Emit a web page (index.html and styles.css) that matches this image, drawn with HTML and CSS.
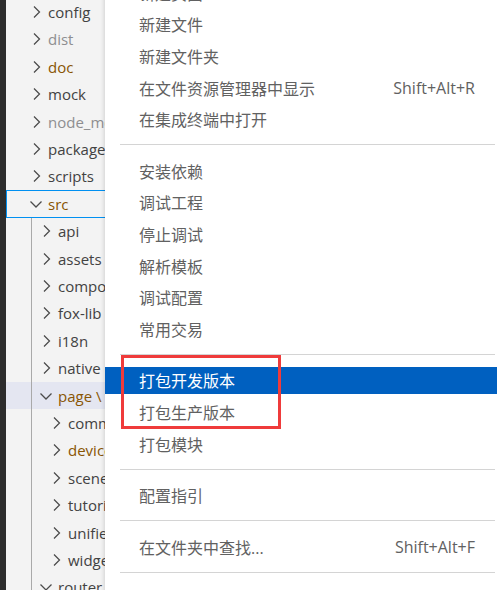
FILE: index.html
```html
<!DOCTYPE html>
<html lang="zh-CN">
<head>
<meta charset="utf-8">
<title>Explorer context menu</title>
<link rel="stylesheet" href="styles.css">
</head>
<body>
<div class="app">
  <div class="activity"></div>
  <div class="sidebar">
    <div class="tree">
      <div class="row d1"><span class="tw"><svg viewBox="0 0 16 16"><path d="M6 2.5 L11.5 8 L6 13.5"/></svg></span><span class="name">config</span></div>
      <div class="row d1"><span class="tw"><svg viewBox="0 0 16 16"><path d="M6 2.5 L11.5 8 L6 13.5"/></svg></span><span class="name ignored">dist</span></div>
      <div class="row d1"><span class="tw"><svg viewBox="0 0 16 16"><path d="M6 2.5 L11.5 8 L6 13.5"/></svg></span><span class="name modified">doc</span></div>
      <div class="row d1"><span class="tw"><svg viewBox="0 0 16 16"><path d="M6 2.5 L11.5 8 L6 13.5"/></svg></span><span class="name">mock</span></div>
      <div class="row d1"><span class="tw"><svg viewBox="0 0 16 16"><path d="M6 2.5 L11.5 8 L6 13.5"/></svg></span><span class="name ignored">node_modules</span></div>
      <div class="row d1"><span class="tw"><svg viewBox="0 0 16 16"><path d="M6 2.5 L11.5 8 L6 13.5"/></svg></span><span class="name">packages</span></div>
      <div class="row d1"><span class="tw"><svg viewBox="0 0 16 16"><path d="M6 2.5 L11.5 8 L6 13.5"/></svg></span><span class="name">scripts</span></div>
      <div class="row d1 focused"><span class="tw"><svg viewBox="0 0 16 16"><path d="M2.5 5.5 L8 11 L13.5 5.5"/></svg></span><span class="name modified">src</span></div>
      <div class="group">
        <div class="row d2"><span class="tw"><svg viewBox="0 0 16 16"><path d="M6 2.5 L11.5 8 L6 13.5"/></svg></span><span class="name">api</span></div>
        <div class="row d2"><span class="tw"><svg viewBox="0 0 16 16"><path d="M6 2.5 L11.5 8 L6 13.5"/></svg></span><span class="name">assets</span></div>
        <div class="row d2"><span class="tw"><svg viewBox="0 0 16 16"><path d="M6 2.5 L11.5 8 L6 13.5"/></svg></span><span class="name">components</span></div>
        <div class="row d2"><span class="tw"><svg viewBox="0 0 16 16"><path d="M6 2.5 L11.5 8 L6 13.5"/></svg></span><span class="name">fox-lib</span></div>
        <div class="row d2"><span class="tw"><svg viewBox="0 0 16 16"><path d="M6 2.5 L11.5 8 L6 13.5"/></svg></span><span class="name">i18n</span></div>
        <div class="row d2"><span class="tw"><svg viewBox="0 0 16 16"><path d="M6 2.5 L11.5 8 L6 13.5"/></svg></span><span class="name">native</span></div>
        <div class="row d2 hover"><span class="tw"><svg viewBox="0 0 16 16"><path d="M2.5 5.5 L8 11 L13.5 5.5"/></svg></span><span class="name modified">page \ views</span></div>
        <div class="row d3"><span class="tw"><svg viewBox="0 0 16 16"><path d="M6 2.5 L11.5 8 L6 13.5"/></svg></span><span class="name">common</span></div>
        <div class="row d3"><span class="tw"><svg viewBox="0 0 16 16"><path d="M6 2.5 L11.5 8 L6 13.5"/></svg></span><span class="name modified">device</span></div>
        <div class="row d3"><span class="tw"><svg viewBox="0 0 16 16"><path d="M6 2.5 L11.5 8 L6 13.5"/></svg></span><span class="name">scene</span></div>
        <div class="row d3"><span class="tw"><svg viewBox="0 0 16 16"><path d="M6 2.5 L11.5 8 L6 13.5"/></svg></span><span class="name">tutorial</span></div>
        <div class="row d3"><span class="tw"><svg viewBox="0 0 16 16"><path d="M6 2.5 L11.5 8 L6 13.5"/></svg></span><span class="name">unified</span></div>
        <div class="row d3"><span class="tw"><svg viewBox="0 0 16 16"><path d="M6 2.5 L11.5 8 L6 13.5"/></svg></span><span class="name">widget</span></div>
        <div class="row d2"><span class="tw"><svg viewBox="0 0 16 16"><path d="M2.5 5.5 L8 11 L13.5 5.5"/></svg></span><span class="name">router</span></div>
      </div>
    </div>
  </div>
</div>

<div class="menu">
  <div class="item"><span class="label">新建页面</span></div>
  <div class="item"><span class="label">新建文件</span></div>
  <div class="item"><span class="label">新建文件夹</span></div>
  <div class="item"><span class="label">在文件资源管理器中显示</span><span class="key">Shift+Alt+R</span></div>
  <div class="item"><span class="label">在集成终端中打开</span></div>
  <div class="sep"></div>
  <div class="item"><span class="label">安装依赖</span></div>
  <div class="item"><span class="label">调试工程</span></div>
  <div class="item"><span class="label">停止调试</span></div>
  <div class="item"><span class="label">解析模板</span></div>
  <div class="item"><span class="label">调试配置</span></div>
  <div class="item"><span class="label">常用交易</span></div>
  <div class="sep"></div>
  <div class="item active"><span class="label">打包开发版本</span></div>
  <div class="item"><span class="label">打包生产版本</span></div>
  <div class="item"><span class="label">打包模块</span></div>
  <div class="sep"></div>
  <div class="item"><span class="label">配置指引</span></div>
  <div class="sep"></div>
  <div class="item"><span class="label">在文件夹中查找...</span><span class="key">Shift+Alt+F</span></div>
  <div class="sep"></div>
</div>

<div class="annot"></div>
</body>
</html>
```

FILE: styles.css
```css
html, body {
  margin: 0;
  padding: 0;
}
body {
  width: 497px;
  height: 590px;
  overflow: hidden;
  position: relative;
  background: #f3f3f3;
  font-family: "Open Sans", "Noto Sans", "Noto Sans CJK SC", sans-serif;
}
.app {
  display: flex;
  height: 590px;
}
.activity {
  width: 6px;
  flex: none;
  background: #2c2c2c;
}
.sidebar {
  flex: 1;
  background: #f3f3f3;
  overflow: hidden;
}
.tree {
  margin-top: -1.6px;
}
.group {
  position: relative;
}
.group::before {
  content: "";
  position: absolute;
  left: 25px;
  top: 0;
  bottom: 0;
  width: 1px;
  background: #a9a9a9;
}
.row {
  height: 27.4px;
  display: flex;
  align-items: center;
  box-sizing: border-box;
  white-space: nowrap;
  font-size: 15px;
  color: #424242;
}
.row.d1 { padding-left: 22px; }
.row.d2 { padding-left: 32px; }
.row.d3 { padding-left: 42px; }
.row.focused {
  outline: 1px solid #0090f1;
  outline-offset: -1px;
}
.row.hover {
  background: #e4e6f1;
}
.tw {
  width: 16px;
  height: 16px;
  flex: none;
  display: flex;
}
.tw svg {
  width: 16px;
  height: 16px;
  fill: none;
  stroke: #4b4b4b;
  stroke-width: 1.25;
}
.name {
  margin-left: 4px;
}
.name.ignored { color: #8e8e90; }
.name.modified { color: #895503; }

.menu {
  position: absolute;
  left: 105px;
  top: -23px;
  width: 392px;
  height: 640px;
  display: flex;
  flex-direction: column;
  background: #ffffff;
  box-shadow: -1px 0 4px rgba(0, 0, 0, 0.14);
  font-family: "Open Sans", "Noto Sans CJK SC", sans-serif;
  font-size: 16px;
  color: #616161;
}
.item {
  height: 27.6px;
  margin: 2px 0;
  padding: 0 22px 0 34px;
  display: flex;
  align-items: center;
  justify-content: space-between;
  white-space: nowrap;
  flex: none;
}
.item.active {
  background: #0060c0;
  color: #ffffff;
}
.key {
  font-size: 16px;
}
.sep {
  height: 1px;
  flex: none;
  margin: 9.5px 2px 9.5px 15px;
  background: #d4d4d4;
}
.annot {
  position: absolute;
  left: 121px;
  top: 355px;
  width: 160px;
  height: 74px;
  box-sizing: border-box;
  border: 3px solid #ef3b3b;
}
```
